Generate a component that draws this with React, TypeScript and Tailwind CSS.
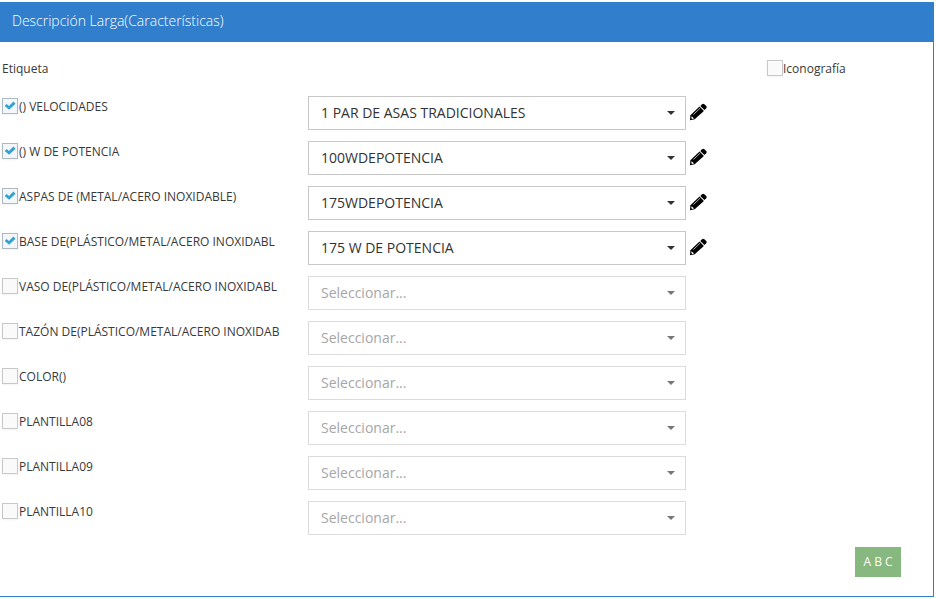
import { useState } from 'react';

type Row = { label: string; value?: string };

const rows: Row[] = [
  { label: '() VELOCIDADES', value: '1 PAR DE ASAS TRADICIONALES' },
  { label: '() W DE POTENCIA', value: '100WDEPOTENCIA' },
  { label: 'ASPAS DE (METAL/ACERO INOXIDABLE)', value: '175WDEPOTENCIA' },
  { label: 'BASE DE(PLÁSTICO/METAL/ACERO INOXIDABL', value: '175 W DE POTENCIA' },
  { label: 'VASO DE(PLÁSTICO/METAL/ACERO INOXIDABL' },
  { label: 'TAZÓN DE(PLÁSTICO/METAL/ACERO INOXIDAB' },
  { label: 'COLOR()' },
  { label: 'PLANTILLA08' },
  { label: 'PLANTILLA09' },
  { label: 'PLANTILLA10' },
];

function Checkbox({ id, initial = false }: { id: string; initial?: boolean }) {
  const [checked, setChecked] = useState(initial);
  return (
    <span className="relative block size-4 shrink-0">
      <input
        id={id}
        type="checkbox"
        checked={checked}
        onChange={(e) => setChecked(e.target.checked)}
        className="block size-4 appearance-none border border-[#c8c8c8] bg-[#fafafa] shadow-[0_1px_2px_rgba(0,0,0,0.05)] checked:border-[#adb8c0] checked:bg-[#f3f7fc]"
      />
      {checked && (
        <svg viewBox="0 0 16 16" className="pointer-events-none absolute inset-0 size-4" aria-hidden="true">
          <path d="M2.7 8 4.6 6 7 8.1 11.4 3.6 13.5 5.7 7.1 11.8Z" fill="#32a3ce" />
        </svg>
      )}
    </span>
  );
}

function Pencil() {
  return (
    <svg viewBox="0 0 18 18" className="block size-[18px]" aria-hidden="true">
      <path d="M11.3 2.9 13 1.2Q14.2.1 15.4 1.2L17.2 3Q18.2 4.1 17.2 5.2L15.4 6.9Z" fill="#000" />
      <path d="M10.5 3.5 14.9 7.9 5.7 16.3 1 17.2 1.4 12.2Z" fill="#000" />
      <path d="M2.7 13.3 5 15.4 3.4 16 2.2 14.9Z" fill="#fff" />
      <path d="M4.5 11.5 11.1 5.2" stroke="#fff" strokeWidth=".7" />
    </svg>
  );
}

export default function App() {
  return (
    <main className="pt-0.5 pr-0.5 font-['Open_Sans',sans-serif] text-[#393939]">
      <section className="border-r border-b border-[#307ecc]">
        <h1 className="-mr-px flex h-10 items-center bg-[#307ecc] px-3 pb-0.5 text-sm font-light text-white">
          Descripción Larga(Características)
        </h1>
        <div className="pt-[15px] pb-[19px]">
          <div className="mb-[17px] grid grid-cols-[308fr_378fr_247fr] items-center text-xs leading-5">
            <span className="pt-0.5 pl-0.5">Etiqueta</span>
            <span />
            <div className="flex items-center pl-[81px]">
              <Checkbox id="iconografia" />
              <label htmlFor="iconografia" className="pt-0.5">Iconografía</label>
            </div>
          </div>
          <div className="flex flex-col gap-[11px]">
            {rows.map(({ label, value }, i) => (
              <div key={label} className="grid grid-cols-[308fr_378fr_247fr]">
                <div className="flex h-5 items-center pl-0.5 text-xs leading-5">
                  <Checkbox id={`row-${i}`} initial={!!value} />
                  <label htmlFor={`row-${i}`} className="pt-0.5 pl-px whitespace-nowrap">{label}</label>
                </div>
                <div className="relative">
                  <select
                    aria-label={label}
                    disabled={!value}
                    className="block h-[34px] w-full appearance-none border border-[#c8c8c8] bg-white px-3 text-sm text-[#333] disabled:border-[#dcdcdc] disabled:text-[#a6a6a6] disabled:opacity-100"
                  >
                    <option>{value ?? 'Seleccionar...'}</option>
                  </select>
                  <svg
                    viewBox="0 0 8 4"
                    className={`pointer-events-none absolute top-[15px] right-[11px] h-1 w-2 ${value ? 'text-[#333]' : 'text-[#777]'}`}
                    aria-hidden="true"
                  >
                    <path d="M0 0H8L4 4Z" fill="currentColor" />
                  </svg>
                </div>
                {value && (
                  <div className="flex h-8 items-center pl-[3px]">
                    <button type="button" aria-label={`Editar ${label}`}>
                      <Pencil />
                    </button>
                  </div>
                )}
              </div>
            ))}
          </div>
          <div className="mt-3 flex justify-end pr-8">
            <button type="button" className="h-[30px] min-w-[46px] bg-[#87b87f] px-2 text-xs text-white">
              A B C
            </button>
          </div>
        </div>
      </section>
    </main>
  );
}
